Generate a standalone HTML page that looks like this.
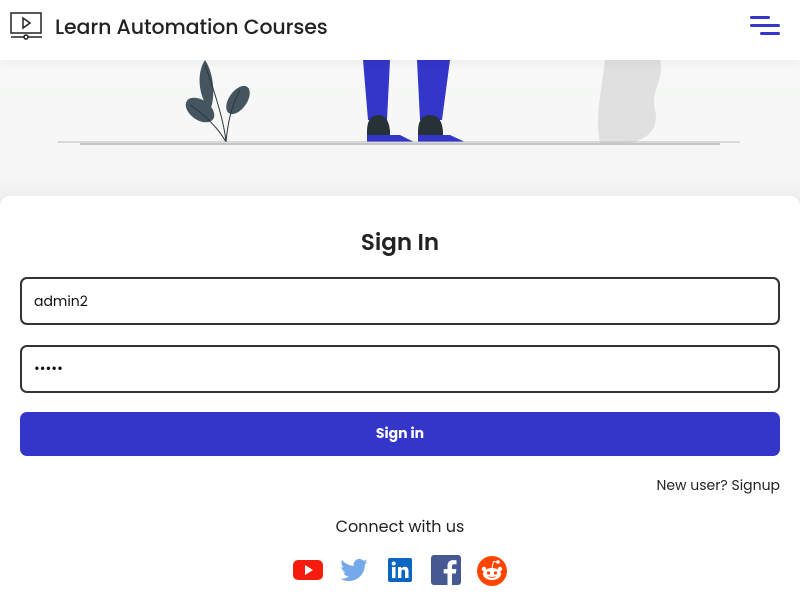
<!DOCTYPE html>
<html><head><meta charset="utf-8">
<style>
*{box-sizing:border-box;margin:0;padding:0}
body{width:800px;height:600px;overflow:hidden;background:#fff;font-family:"Poppins","Liberation Sans",sans-serif;color:#222;position:relative}
.hdr{position:absolute;top:0;left:0;width:800px;height:60px;background:#fff;z-index:3;box-shadow:0 2px 10px rgba(0,0,0,.06)}
.hdr .t{position:absolute;left:55px;top:12px;font-size:20.5px;font-weight:500;letter-spacing:-0.1px;color:#222}
.hero{position:absolute;top:60px;left:0;width:800px;height:150px;background:linear-gradient(#f7f8f7,#f5f6f5 80%,#e8e9e8)}
.card{position:absolute;top:196px;left:0;width:800px;height:404px;background:#fff;border-radius:10px 10px 0 0;z-index:2}
h1{position:absolute;top:30px;width:800px;text-align:center;font-size:23px;font-weight:600;color:#222}
.inp{position:absolute;left:20px;width:760px;height:48px;border:2px solid #333;border-radius:7px;font-size:14px;padding:12px 12px;color:#111}
.btn{position:absolute;left:20px;top:216px;width:760px;height:44px;background:#3336c9;border-radius:7px;color:#fff;font-size:14px;font-weight:700;text-align:center;line-height:43px}
.nu{position:absolute;right:20px;top:279px;font-size:14px;color:#222}
.cw{position:absolute;top:318px;width:800px;text-align:center;font-size:16px;color:#222}
.ic{position:absolute;top:360px}
</style></head><body>
<div class="hdr">
<svg style="position:absolute;left:10px;top:12px" width="34" height="28" viewBox="0 0 34 28"><rect x="1" y="1" width="30" height="20" fill="none" stroke="#222" stroke-width="1.5"/><path d="M13 6 L20 11 L13 16 Z" fill="none" stroke="#222" stroke-width="1.5"/><line x1="1" y1="25" x2="32" y2="25" stroke="#222" stroke-width="1.5"/><circle cx="16" cy="25" r="2" fill="#fff" stroke="#222" stroke-width="1.5"/></svg>
<div class="t">Learn Automation Courses</div>
<svg style="position:absolute;left:748px;top:15px" width="34" height="22"><rect x="2" y="1" width="20" height="3" rx="1.5" fill="#3336c9"/><rect x="2" y="9" width="30" height="3" rx="1.5" fill="#3336c9"/><rect x="12" y="17" width="20" height="3" rx="1.5" fill="#3336c9"/></svg>
</div>
<div class="hero">
<svg width="800" height="150">
<path d="M135 0 C145 15 145 40 140 50 C130 40 125 15 135 0Z" fill="#44555f" transform="translate(70,0)"/>
<ellipse cx="238" cy="40" rx="9" ry="16" transform="rotate(35 238 40)" fill="#44555f"/>
<ellipse cx="200" cy="50" rx="16" ry="10" transform="rotate(35 200 50)" fill="#44555f"/>
<path d="M226 82 C224 60 214 30 205 5 M226 82 C228 60 232 45 240 30 M226 82 C218 68 205 55 190 45" stroke="#2a353b" fill="none" stroke-width="1"/>
<path d="M363 0 L390 0 L387 60 L368 60Z" fill="#3336c9"/>
<path d="M417 0 L450 0 L442 60 L420 60Z" fill="#3336c9"/>
<path d="M367 72 Q367 55 378 55 Q389 55 390 72 L390 77 L367 77Z" fill="#263238"/>
<path d="M418 72 Q418 55 430 55 Q442 55 443 72 L443 77 L418 77Z" fill="#263238"/>
<path d="M367 75 L400 75 L414 82 L367 82Z" fill="#3336c9"/>
<path d="M418 75 L450 75 L465 82 L418 82Z" fill="#3336c9"/>
<path d="M605 0 L660 0 C665 20 650 30 655 50 C660 70 645 80 630 83 L600 83 C595 60 600 40 605 0Z" fill="#e0e0e0"/>
<line x1="58" y1="82" x2="740" y2="82" stroke="#bbb" stroke-width="1"/>
<line x1="80" y1="84" x2="720" y2="84" stroke="#8a969c" stroke-width="1"/>
</svg>
</div>
<div class="card">
<h1>Sign In</h1>
<div class="inp" style="top:81px">admin2</div>
<div class="inp" style="top:149px;font-size:14px;padding-top:11px;letter-spacing:0px">•••••</div>
<div class="btn">Sign in</div>
<div class="nu">New user? Signup</div>
<div class="cw">Connect with us</div>
<svg class="ic" style="left:292px;top:361px" width="32" height="24"><rect x="1" y="3" width="30" height="20" rx="5" fill="#f61c0d"/><path d="M13 8 L21 13 L13 18Z" fill="#fff"/></svg>
<svg class="ic" style="left:338px" width="32" height="30" viewBox="0 0 24 24"><path d="M23 4.5c-.8.4-1.7.6-2.6.7.9-.6 1.6-1.4 2-2.5-.9.5-1.9.9-2.9 1.1A4.5 4.5 0 0 0 11.8 7.9 12.8 12.8 0 0 1 2.5 3.2a4.5 4.5 0 0 0 1.4 6 4.5 4.5 0 0 1-2-.6 4.5 4.5 0 0 0 3.6 4.4 4.5 4.5 0 0 1-2 .1 4.5 4.5 0 0 0 4.2 3.1A9 9 0 0 1 1 18.1 12.8 12.8 0 0 0 7.9 20c8.3 0 12.8-6.9 12.8-12.8v-.6c.9-.6 1.6-1.4 2.3-2.1z" fill="#76a9ea"/></svg>
<svg class="ic" style="left:388px;top:362px" width="24" height="24" viewBox="0 0 24 24"><rect width="24" height="24" rx="2" fill="#0b66c2"/><rect x="4" y="9" width="3.5" height="11" fill="#fff"/><circle cx="5.7" cy="5.5" r="2" fill="#fff"/><path d="M10 9h3.3v1.6c.6-1 1.8-1.9 3.5-1.9 3 0 3.7 2 3.7 4.6V20H17v-5.8c0-1.4-.2-2.6-1.7-2.6s-1.9 1.1-1.9 2.6V20H10z" fill="#fff"/></svg>
<svg class="ic" style="left:431px;top:359px" width="30" height="30" viewBox="0 0 30 30"><rect width="30" height="30" rx="3" fill="#475993"/><path d="M21 30V18.5h3.8l.6-4.4H21v-2.8c0-1.3.4-2.1 2.2-2.1h2.3V5.3c-.4-.1-1.8-.2-3.4-.2-3.3 0-5.6 2-5.6 5.8v3.2h-3.8v4.4h3.8V30z" fill="#fff"/></svg>
<svg class="ic" style="left:476px;top:359px" width="32" height="32" viewBox="0 0 32 32"><circle cx="16" cy="16" r="15" fill="#ff4500"/><ellipse cx="16" cy="19" rx="9" ry="6" fill="#fff"/><circle cx="24" cy="14" r="2.2" fill="#fff"/><circle cx="8" cy="14" r="2.2" fill="#fff"/><circle cx="22" cy="7" r="1.8" fill="#fff"/><path d="M16 13 L17.5 6.5 L22 7" stroke="#fff" fill="none" stroke-width="1"/><circle cx="12.5" cy="18" r="1.6" fill="#ff4500"/><circle cx="19.5" cy="18" r="1.6" fill="#ff4500"/><path d="M12.5 21.5 Q16 23.5 19.5 21.5" stroke="#ff4500" fill="none" stroke-width="1"/></svg>
</div>
</body></html>
